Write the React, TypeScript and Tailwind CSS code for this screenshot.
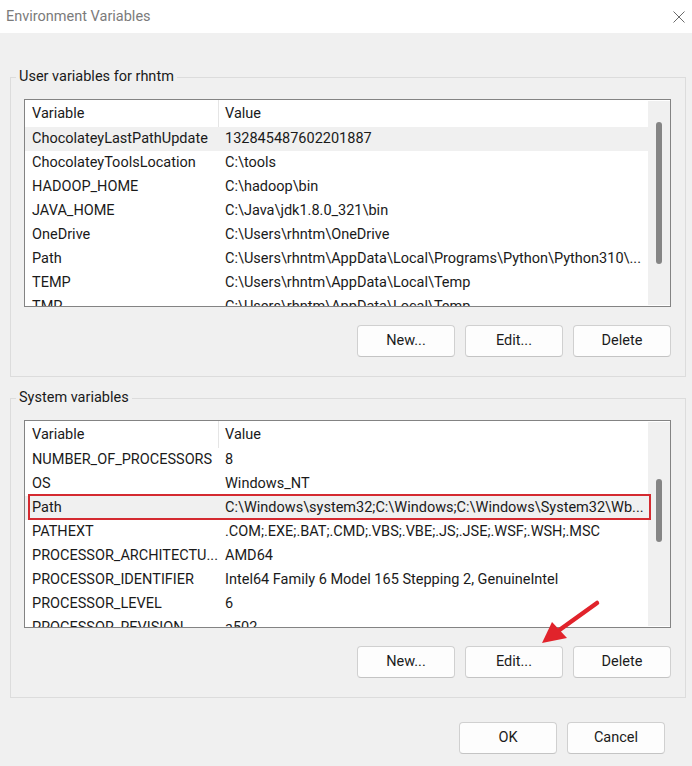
import React from 'react';

interface EnvVar {
  name: string;
  value: string;
}

const userVars: EnvVar[] = [
  { name: 'ChocolateyLastPathUpdate', value: '132845487602201887' },
  { name: 'ChocolateyToolsLocation', value: 'C:\\tools' },
  { name: 'HADOOP_HOME', value: 'C:\\hadoop\\bin' },
  { name: 'JAVA_HOME', value: 'C:\\Java\\jdk1.8.0_321\\bin' },
  { name: 'OneDrive', value: 'C:\\Users\\rhntm\\OneDrive' },
  { name: 'Path', value: 'C:\\Users\\rhntm\\AppData\\Local\\Programs\\Python\\Python310\\...' },
  { name: 'TEMP', value: 'C:\\Users\\rhntm\\AppData\\Local\\Temp' },
  { name: 'TMP', value: 'C:\\Users\\rhntm\\AppData\\Local\\Temp' },
];

const systemVars: EnvVar[] = [
  { name: 'NUMBER_OF_PROCESSORS', value: '8' },
  { name: 'OS', value: 'Windows_NT' },
  { name: 'Path', value: 'C:\\Windows\\system32;C:\\Windows;C:\\Windows\\System32\\Wb...' },
  { name: 'PATHEXT', value: '.COM;.EXE;.BAT;.CMD;.VBS;.VBE;.JS;.JSE;.WSF;.WSH;.MSC' },
  { name: 'PROCESSOR_ARCHITECTU...', value: 'AMD64' },
  { name: 'PROCESSOR_IDENTIFIER', value: 'Intel64 Family 6 Model 165 Stepping 2, GenuineIntel' },
  { name: 'PROCESSOR_LEVEL', value: '6' },
  { name: 'PROCESSOR_REVISION', value: 'a502' },
];

const WinButton: React.FC<{ label: string }> = ({ label }) => (
  <button className="w-[98px] h-[32px] rounded-[4px] border border-[#d0d0d0] border-b-[#c4c4c4] bg-[#fdfdfd] text-[14.5px] text-[#1b1b1b]">
    {label}
  </button>
);

interface VarListProps {
  rows: EnvVar[];
  selected: number;
  outlined?: boolean;
  thumbClass: string;
}

const VarList: React.FC<VarListProps> = ({ rows, selected, outlined, thumbClass }) => (
  <div className="h-[208px] border border-[#838383] bg-white flex overflow-hidden">
    <div className="flex-1 min-w-0 flex flex-col">
      {/* Column header */}
      <div className="h-[27px] shrink-0 flex items-center">
        <div className="w-[194px] h-full flex items-center pl-[7px] border-r border-[#e5e5e5]">Variable</div>
        <div className="flex-1 pl-[6px]">Value</div>
      </div>
      {rows.map((row, i) => (
        <div
          key={row.name}
          className={`relative h-[24px] shrink-0 flex items-center ${i === selected ? 'bg-[#f0f0f0]' : ''}`}
        >
          <div className="w-[194px] pl-[7px] whitespace-nowrap overflow-hidden">{row.name}</div>
          <div className="flex-1 min-w-0 pl-[6px] whitespace-nowrap overflow-hidden">{row.value}</div>
          {outlined && i === selected && (
            <div className="absolute top-[-2px] bottom-0 left-[3px] right-[-3px] border-2 border-[#d42a30]" />
          )}
        </div>
      ))}
    </div>
    {/* Scrollbar */}
    <div className="w-[22px] shrink-0 my-[1px] bg-[#f0f0f0] flex justify-center">
      <div className={`w-[6px] rounded-full bg-[#858585] ${thumbClass}`} />
    </div>
  </div>
);

interface GroupProps {
  title: string;
  rows: EnvVar[];
  selected: number;
  outlined?: boolean;
  thumbClass: string;
  className?: string;
}

const Group: React.FC<GroupProps> = ({ title, rows, selected, outlined, thumbClass, className }) => (
  <fieldset className={`border border-[#dcdcdc] ${className ?? ''}`}>
    <legend className="ml-[5px] px-[3px] h-[20px] leading-[20px]">{title}</legend>
    <div className="pl-[13px] pr-[14px] pt-[12px] pb-[19px]">
      <VarList rows={rows} selected={selected} outlined={outlined} thumbClass={thumbClass} />
      <div className="flex justify-end gap-[10px] mt-[18px]">
        <WinButton label="New..." />
        <WinButton label="Edit..." />
        <WinButton label="Delete" />
      </div>
    </div>
  </fieldset>
);

export default function App() {
  return (
    <div className="relative w-[692px] h-[766px] overflow-hidden bg-[#f0f0f0] text-[14.5px] text-[#1a1a1a] font-['Roboto','Liberation_Sans',Arial,sans-serif]">
      {/* Title bar */}
      <div className="h-[33px] bg-white flex items-center justify-between pl-[6px] pr-[7px]">
        <span className="text-[14.5px] text-[#7b7b7b]">Environment Variables</span>
        <svg width="12" height="12" viewBox="0 0 12 12" fill="none" stroke="#6a6a6a" strokeWidth="1">
          <path d="M0.5 0.5 L11.5 11.5 M11.5 0.5 L0.5 11.5" />
        </svg>
      </div>

      {/* Body */}
      <div className="pl-[10px] pr-[6px] pt-[34px]">
        <Group
          title="User variables for rhntm"
          rows={userVars}
          selected={0}
          thumbClass="mt-[21px] h-[142px]"
        />
        <Group
          title="System variables"
          rows={systemVars}
          selected={2}
          outlined
          thumbClass="mt-[57px] h-[63px]"
          className="mt-[11px]"
        />
        <div className="flex justify-end gap-[10px] mt-[24px] pr-[21px]">
          <WinButton label="OK" />
          <WinButton label="Cancel" />
        </div>
      </div>

      {/* Red annotation arrow */}
      <svg className="absolute left-[535px] top-[595px]" width="70" height="55" viewBox="0 0 70 55">
        <line x1="62" y1="8" x2="23" y2="36" stroke="#e1232b" strokeWidth="4.5" strokeLinecap="round" />
        <polygon points="7,48 17,27 32,43" fill="#e1232b" />
      </svg>
    </div>
  );
}
